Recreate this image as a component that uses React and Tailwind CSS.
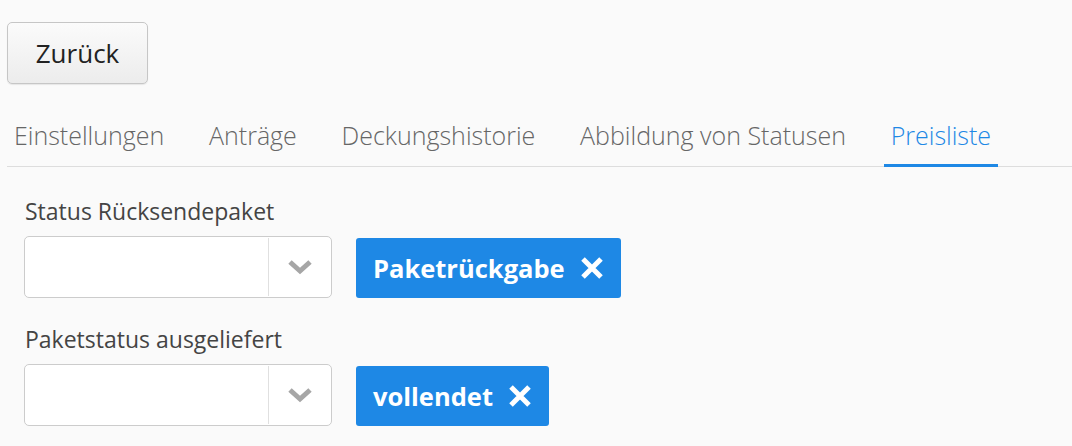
import React from 'react'

const tabs = ['Einstellungen', 'Anträge', 'Deckungshistorie', 'Abbildung von Statusen', 'Preisliste']

const Chevron = () => (
  <svg width="26" height="16" viewBox="0 0 26 16" fill="none">
    <path d="M3 3 L13 12 L23 3" stroke="#a6a6a6" strokeWidth="5" strokeLinecap="butt" strokeLinejoin="miter" />
  </svg>
)

const XIcon = () => (
  <svg width="24" height="24" viewBox="0 0 24 24" fill="none">
    <path d="M3 3 L21 21 M21 3 L3 21" stroke="#fff" strokeWidth="5" />
  </svg>
)

const Field = ({ label, tag }) => (
  <div className="flex flex-col">
    <label className="text-[23px] text-[#444] leading-[30px] pl-[1px]">{label}</label>
    <div className="flex items-start gap-[24px] mt-[10px]">
      <div className="w-[308px] h-[62px] bg-white border border-[#cccccc] rounded-[5px] flex">
        <div className="flex-1" />
        <div className="w-[63px] border-l border-[#e0e0e0] my-[1px] flex items-center justify-center">
          <Chevron />
        </div>
      </div>
      <span className="mt-[2px] h-[60px] bg-[#1e88e5] rounded-[3px] px-[17px] flex items-center gap-[15px] text-white font-bold text-[25.5px]">
        {tag}
        <XIcon />
      </span>
    </div>
  </div>
)

export default function App() {
  return (
    <div className="w-[1072px] h-[446px] bg-[#fafafa] overflow-hidden" style={{ fontFamily: '"Open Sans", sans-serif' }}>
      <div className="pt-[22px] pl-[7px]">
        <button className="w-[141px] h-[62px] rounded-[5px] border border-[#c6c6c6] bg-gradient-to-b from-[#fbfbfb] to-[#ececec] text-[26px] text-[#222] shadow-[0_1px_1px_rgba(0,0,0,0.08)]">
          Zurück
        </button>
      </div>
      <div className="ml-[7px] mt-[35px] flex gap-[30.75px] border-b border-[#dddddd]">
        {tabs.map((t, i) => (
          <div
            key={t}
            className={`px-[7px] pb-[12px] text-[25px] font-light leading-[33px] border-b-[3px] -mb-[1px] ${
              i === 4 ? 'text-[#1e88e5] border-[#1e88e5]' : 'text-[#666] border-transparent'
            }`}
          >
            {t}
          </div>
        ))}
      </div>
      <div className="pl-[24px] pt-[29px] flex flex-col gap-[26px]">
        <Field label="Status Rücksendepaket" tag="Paketrückgabe" />
        <Field label="Paketstatus ausgeliefert" tag="vollendet" />
      </div>
    </div>
  )
}
